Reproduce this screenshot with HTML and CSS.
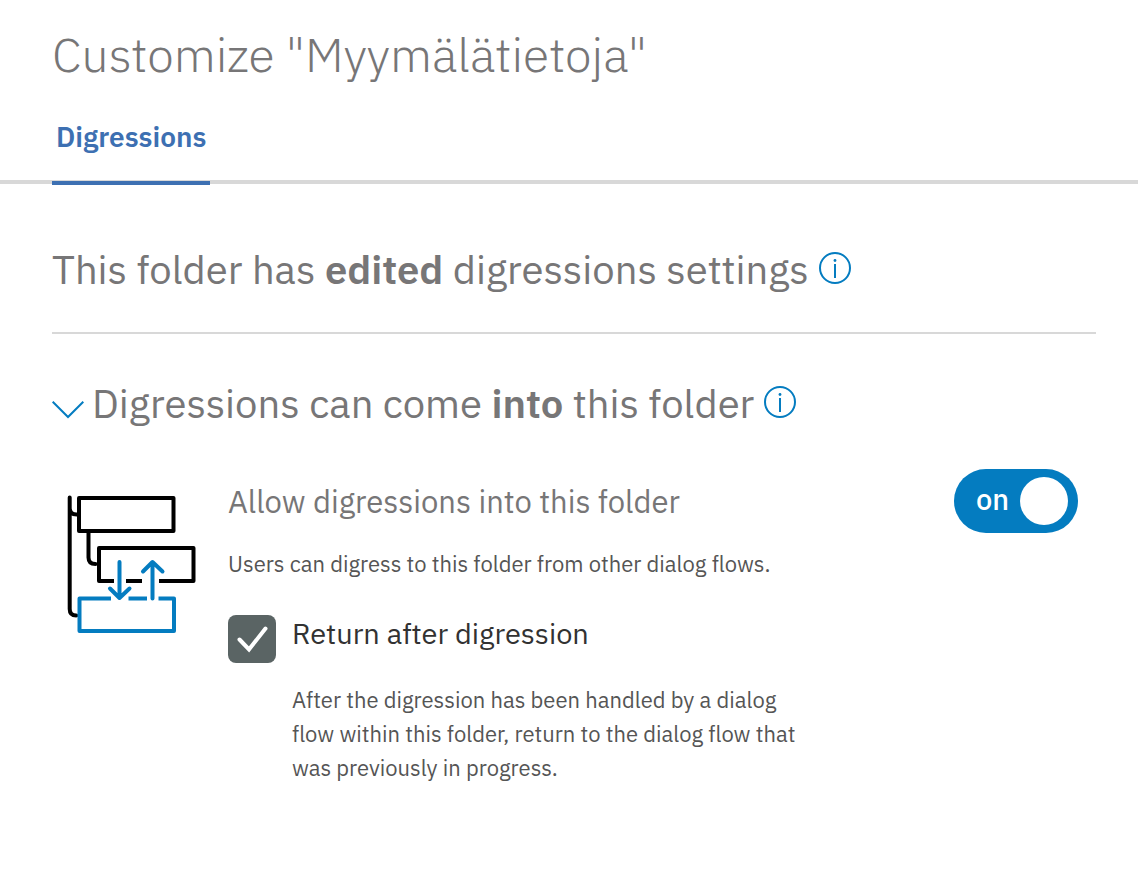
FILE: index.html
```html
<!DOCTYPE html>
<html lang="en">
<head>
<meta charset="utf-8">
<title>Customize "Myymälätietoja"</title>
<link rel="stylesheet" href="styles.css">
</head>
<body>
<header class="header">
  <h1 class="title">Customize "Myymälätietoja"</h1>
  <div class="tabs" role="tablist">
    <button class="tab" type="button" role="tab" aria-selected="true">Digressions</button>
  </div>
</header>
<main class="content">
  <section class="summary">
    <h2 class="heading">This folder has <b>edited</b> digressions settings</h2>
    <button class="icon-button info-button" type="button" aria-label="About digressions settings">
      <svg class="info" viewBox="0 0 32 32" aria-hidden="true"><circle cx="16" cy="16" r="15"/><path d="M16 12v14"/><circle class="dot" cx="16" cy="8.5" r="1.4"/></svg>
    </button>
  </section>
  <section class="into">
    <div class="into-header">
      <button class="icon-button chevron-button" type="button" aria-label="Collapse" aria-expanded="true">
        <svg class="chevron" viewBox="0 0 32 18" aria-hidden="true"><path d="M.7.7 16 16 31.3.7"/></svg>
      </button>
      <h2 class="heading">Digressions can come <b>into</b> this folder</h2>
      <button class="icon-button info-button" type="button" aria-label="About digressions into this folder">
        <svg class="info" viewBox="0 0 32 32" aria-hidden="true"><circle cx="16" cy="16" r="15"/><path d="M16 12v14"/><circle class="dot" cx="16" cy="8.5" r="1.4"/></svg>
      </button>
    </div>
    <div class="setting">
      <svg class="diagram" viewBox="64 492 136 144" aria-hidden="true">
        <g class="nodes">
          <path d="M79 498h94.500v33H79z"/>
          <path d="M69.700 497.500V609q0 6.500 6.500 6.500M69.700 508q0 6.500 7 6.500M88.500 531v26.500q0 6.500 7 6.500"/>
          <path class="butt" d="M114 581H99v-33h94.500v33h-34.500M126 581h16"/>
        </g>
        <g class="target">
          <path class="butt" d="M111 598.500H79.500v32.500H174v-32.500H158.500M128.500 598.500h18.500"/>
          <path d="M119.500 562v36M110 588.500l9.500 9.500 10-9.500M152.500 598.500v-36M143 571.500l9.500-9.500 10 9.500"/>
        </g>
      </svg>
      <div class="details">
        <h3 class="setting-title" id="allow">Allow digressions into this folder</h3>
        <p class="note">Users can digress to this folder from other dialog flows.</p>
        <div class="option">
          <span class="check">
            <input class="check-input" type="checkbox" id="return" checked>
            <svg class="check-mark" viewBox="0 0 48 48" aria-hidden="true"><path d="M11.500 24.500 21 34.500 37.500 13.500"/></svg>
          </span>
          <div class="option-text">
            <label class="option-label" for="return">Return after digression</label>
            <p class="note">After the digression has been handled by a dialog flow within this folder, return to the dialog flow that was previously in progress.</p>
          </div>
        </div>
      </div>
      <button class="toggle" type="button" role="switch" aria-checked="true" aria-labelledby="allow"><span class="toggle-text">on</span><span class="knob"></span></button>
    </div>
  </section>
</main>
</body>
</html>
```
FILE: styles.css
```css
* { box-sizing: border-box; }
body {
  margin: 0;
  background: #fff;
  color: #777677;
  font-family: "IBM Plex Sans", Roboto, sans-serif;
}
h1, h2, h3, p { margin: 0; }
b { font-weight: 600; }
button { border: 0; background: none; padding: 0; color: inherit; font: inherit; cursor: pointer; }
.header { padding-top: 22px; }
.title {
  padding: 0 52px;
  font-size: 48px;
  line-height: 64px;
  font-weight: 300;
}
.tabs {
  display: flex;
  margin-top: 26px;
  padding: 0 52px;
  box-shadow: inset 0 -1px #fff, inset 0 -5px #d8d8d8;
}
.tab {
  height: 73px;
  padding: 0 4px 20px;
  border-bottom: 4px solid #3d70b2;
  color: #3d70b2;
  font-size: 28px;
  line-height: 36px;
  font-weight: 600;
}
.content { padding: 0 42px 0 52px; }
.summary {
  display: flex;
  align-items: center;
  height: 149px;
  padding-top: 20px;
  border-bottom: 2px solid #d8d8d8;
}
.heading { font-size: 40px; line-height: 56px; font-weight: 400; }
.icon-button { display: flex; flex: none; }
.info-button { margin-left: 10px; padding-bottom: 2px; }
.info { width: 32px; height: 32px; fill: none; stroke: #047cc0; stroke-width: 2; }
.info .dot { fill: #047cc0; stroke: none; }
.chevron { width: 32px; height: 18px; fill: none; stroke: #047cc0; stroke-width: 2; }
.into-header { display: flex; align-items: center; padding-top: 41px; }
.chevron-button { margin-right: 8px; padding-top: 14px; }
.setting { display: flex; align-items: flex-start; margin-top: 38px; padding: 0 18px 0 12px; }
.diagram { flex: none; width: 136px; height: 144px; margin-top: 23px; fill: none; stroke-width: 4; stroke-linejoin: round; stroke-linecap: round; }
.nodes { stroke: #000; }
.target { stroke: #047cc0; }
.butt { stroke-linecap: butt; }
.details { width: 580px; margin: 13px 0 0 28px; }
.setting-title { font-size: 31px; line-height: 40px; font-weight: 400; }
.note { color: #555; font-size: 22px; line-height: 34px; }
.setting-title + .note { margin-top: 25px; }
.option { display: flex; gap: 16px; margin-top: 34px; }
.check { position: relative; flex: none; width: 48px; height: 48px; }
.check-input { appearance: none; display: block; width: 48px; height: 48px; margin: 0; border-radius: 8px; background: #5a6464; }
.check-mark { position: absolute; inset: 0; fill: none; stroke: #fff; stroke-width: 4; stroke-linecap: round; pointer-events: none; }
.check-input:not(:checked) + .check-mark { display: none; }
.option-label { display: block; color: #323232; font-size: 29px; line-height: 36px; }
.option-label + .note { margin-top: 32px; }
.toggle {
  display: flex;
  align-items: center;
  justify-content: space-between;
  flex: none;
  width: 124px;
  height: 64px;
  margin-left: auto;
  padding: 0 10px 0 22px;
  border-radius: 32px;
  background: #047cc0;
  color: #fff;
  font-size: 29px;
  font-weight: 500;
}
.toggle-text { padding-bottom: 4px; }
.knob { width: 48px; height: 48px; border-radius: 50%; background: #fff; }
```
